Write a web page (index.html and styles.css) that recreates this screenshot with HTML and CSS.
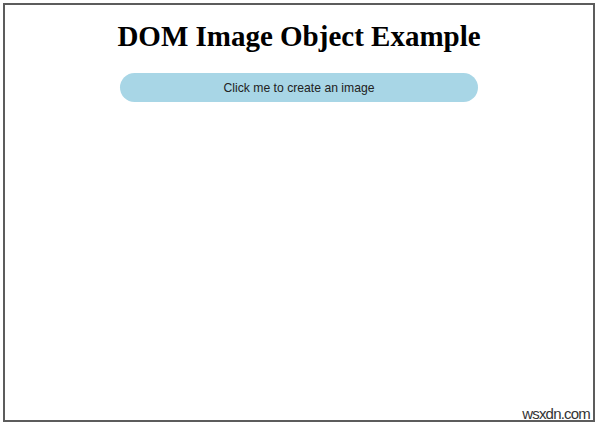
FILE: index.html
```html
<!DOCTYPE html>
<html>
<head>
<meta charset="utf-8">
<link rel="stylesheet" href="styles.css">
</head>
<body>
<div class="frame">
  <h1 class="title">DOM Image Object Example</h1>
  <button class="btn">Click me to create an image</button>
  <span class="mark">wsxdn.com</span>
</div>
</body>
</html>
```
FILE: styles.css
```css
html, body {
  margin: 0;
  padding: 0;
  background: #ffffff;
}
.frame {
  position: relative;
  box-sizing: border-box;
  margin: 3px 0 0 3px;
  width: 592px;
  height: 419px;
  border: 2px solid #5c5c5c;
  display: flex;
  flex-direction: column;
  align-items: center;
}
.title {
  margin: 14px 0 0 0;
  font-family: "Liberation Serif", "Times New Roman", serif;
  font-weight: bold;
  font-size: 29px;
  line-height: 35px;
  color: #000;
}
.btn {
  margin-top: 19px;
  width: 358px;
  height: 29px;
  border: none;
  border-radius: 15px;
  background: #a8d6e6;
  font-family: "Liberation Sans", Arial, sans-serif;
  font-size: 12.2px;
  color: #222;
  padding: 0;
}
.mark {
  position: absolute;
  right: 3px;
  bottom: -2px;
  font-family: "Liberation Sans", Arial, sans-serif;
  font-size: 15px;
  letter-spacing: -0.8px;
  line-height: 17px;
  color: #333;
}
```
